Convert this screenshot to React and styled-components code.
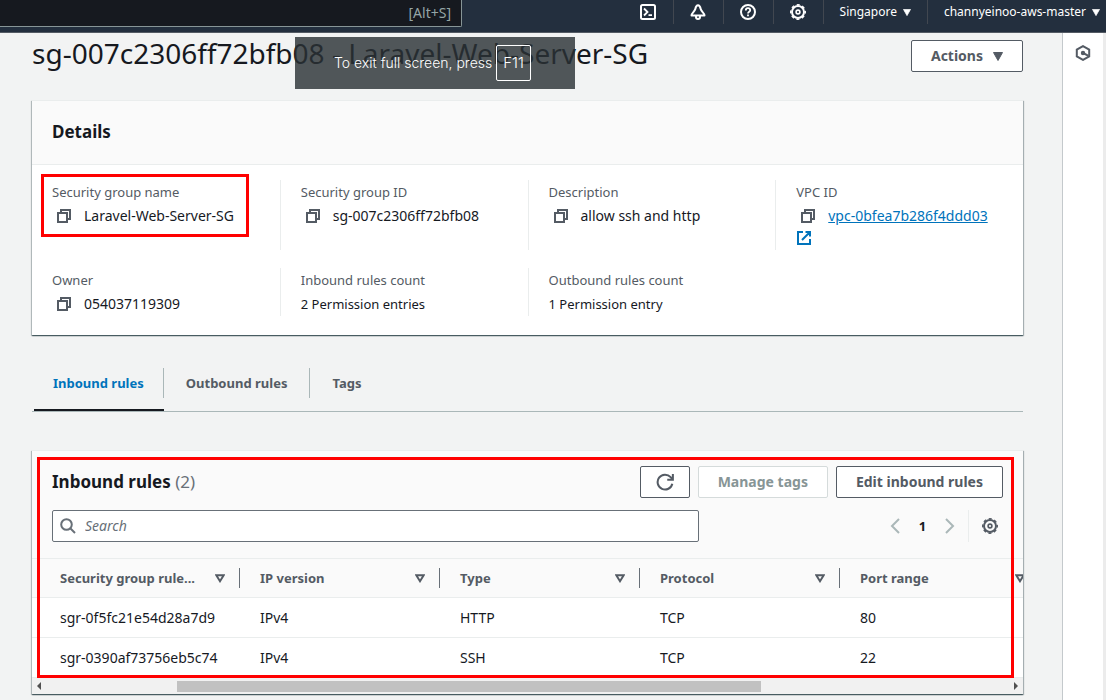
import React from "react";
import styled, { createGlobalStyle, css } from "styled-components";

const c = {
  text: "#16191f",
  label: "#545b64",
  link: "#0073bb",
  line: "#eaeded",
  disabled: "#879596",
  page: "#f2f3f3",
};

const GlobalStyle = createGlobalStyle`
  * { box-sizing: border-box; }
  body {
    margin: 0;
    background: ${c.page};
    color: ${c.text};
    font-family: "Noto Sans", "Open Sans", sans-serif;
    font-size: 13px;
    line-height: 22px;
    overflow: hidden;
  }
  button, input { font: inherit; color: inherit; margin: 0; }
  h1, h2, dl, dd, dt { margin: 0; font-weight: 400; }
  svg { display: block; flex: none; }
`;

const Page = styled.div`
  display: flex;
  flex-direction: column;
  height: 100vh;
`;

/* Top navigation */
const TopNav = styled.header`
  display: flex;
  flex: none;
  align-items: flex-start;
  justify-content: space-between;
  height: 33px;
  background: #232f3e;
  border-bottom: 1px solid #545b64;
  color: #fff;
`;
const GlobalSearch = styled.div`
  display: flex;
  justify-content: flex-end;
  width: 462px;
  height: 27px;
  padding: 2px 10px 0;
  background: #16191f;
  border: solid #879596;
  border-width: 0 1px 1px 0;
  border-radius: 0 0 2px 0;
  color: #95a5a6;
  font-size: 14px;
`;
const NavItems = styled.nav`
  display: flex;
  height: 24px;
`;
const NavButton = styled.button`
  display: flex;
  align-items: center;
  justify-content: center;
  gap: 6px;
  min-width: 50px;
  height: 24px;
  padding: ${(p) => (p.$wide ? "0 16px" : "0")};
  background: none;
  border: 0;
  border-left: ${(p) => (p.$first ? "0" : "1px solid #414750")};
  font-size: 12px;
  ${(p) => p.$last && css`padding-right: 6px;`}
`;

/* Page frame */
const Body = styled.div`
  display: flex;
  flex: 1;
  min-height: 0;
`;
const Main = styled.main`
  flex: 1;
  min-width: 0;
  padding: 5px 39px 0 32px;
  overflow: hidden;
`;
const ToolRail = styled.aside`
  display: flex;
  flex: none;
  justify-content: center;
  width: 44px;
  padding-top: 12px;
  background: #fff;
  border-left: 1px solid #c4c9cc;
  border-right: 3px solid #ececec;
`;
const IconButton = styled.button`
  display: flex;
  align-items: center;
  justify-content: center;
  width: 16px;
  height: 16px;
  padding: 0;
  background: none;
  border: 0;
  color: ${(p) => p.$color || c.label};
`;
const TitleRow = styled.div`
  display: flex;
  align-items: flex-end;
  justify-content: space-between;
  height: 34px;
`;
const Title = styled.h1`
  align-self: flex-start;
  font-size: 28px;
  line-height: 30px;
  white-space: nowrap;
`;
const Button = styled.button`
  display: flex;
  align-items: center;
  justify-content: center;
  gap: 10px;
  height: 32px;
  padding: 0 ${(p) => (p.$icon ? 15 : 19)}px;
  background: #fff;
  border: 1px solid ${c.label};
  border-radius: 2px;
  color: ${c.label};
  font-size: 14px;
  font-weight: 700;
  white-space: nowrap;
  &:disabled { border-color: #d5dbdb; color: ${c.disabled}; }
`;

/* Panels */
const Panel = styled.section`
  position: relative;
  background: #fff;
  border-top: 1px solid ${c.line};
  box-shadow: 0 1px 1px 0 rgba(0, 28, 36, 0.5), 1px 1px 1px 0 rgba(0, 28, 36, 0.25), -1px 1px 1px 0 rgba(0, 28, 36, 0.2);
`;
const DetailsPanel = styled(Panel)`
  margin-top: 28px;
`;
const PanelHeader = styled.div`
  padding: 19px 20px 20px;
  background: #fafafa;
  border-bottom: 1px solid ${c.line};
`;
const PanelTitle = styled.h2`
  font-size: 17px;
  font-weight: 700;
  line-height: 24px;
`;
const Count = styled.span`
  color: #687078;
  font-weight: 400;
`;
const Fields = styled.dl`
  display: grid;
  grid-template-columns: repeat(4, 1fr);
  row-gap: 18px;
  padding: 15px 0 19px;
`;
const Field = styled.div`
  position: relative;
  padding: 0 20px;
  border-left: ${(p) => (p.$first ? "0" : `1px solid ${c.line}`)};
`;
const Label = styled.dt`
  color: ${c.label};
  line-height: 24px;
`;
const Value = styled.dd`
  display: flex;
  flex-wrap: wrap;
  align-items: center;
  font-size: ${(p) => (p.$copy ? 14 : 13)}px;
  line-height: 24px;
`;
const CopyButton = styled(IconButton)`
  margin: 0 12px 0 4px;
`;
const Link = styled.a`
  color: ${c.link};
`;
const ExternalLink = styled.a`
  flex-basis: 100%;
  padding: 2px 0 4px;
  color: ${c.link};
`;
const FieldMarker = styled.span`
  position: absolute;
  inset: -6px 31px 13px 9px;
  border: 3px solid #f00;
  pointer-events: none;
`;
const PanelMarker = styled.span`
  position: absolute;
  inset: 6px 9px 16px 5px;
  border: 3px solid #f00;
  pointer-events: none;
`;

/* Tabs */
const Tabs = styled.div`
  display: flex;
  align-items: flex-end;
  height: 55px;
  margin-top: 22px;
  border-bottom: 1px solid #aab7b8;
`;
const Tab = styled.button`
  display: flex;
  align-items: flex-start;
  height: 43px;
  margin-left: ${(p) => (p.$active ? 2 : 0)}px;
  padding: 0;
  background: none;
  border: 0;
  border-bottom: 2px solid ${(p) => (p.$active ? c.text : "transparent")};
  color: ${(p) => (p.$active ? c.link : c.label)};
  font-weight: 700;
`;
const TabLabel = styled.span`
  padding: 4px ${(p) => (p.$active ? 19 : 22)}px;
  border-right: ${(p) => (p.$last ? "0" : "1px solid #aab7b8")};
`;

/* Rules table */
const RulesPanel = styled(Panel)`
  margin-top: 38px;
`;
const RulesHeader = styled.div`
  display: flex;
  flex-direction: column;
  gap: 12px;
  padding: 15px 20px 16px;
  background: #fafafa;
  border-bottom: 1px solid ${c.line};
`;
const Row = styled.div`
  display: flex;
  align-items: center;
  justify-content: space-between;
`;
const Actions = styled.div`
  display: flex;
  gap: 8px;
`;
const SearchBox = styled.label`
  display: flex;
  align-items: center;
  gap: 9px;
  width: 68%;
  height: 32px;
  padding: 0 7px;
  background: #fff;
  border: 1px solid #687078;
  border-radius: 2px;
  color: #687078;
`;
const SearchInput = styled.input`
  flex: 1;
  padding: 0;
  background: none;
  border: 0;
  outline: 0;
  font-size: 14px;
  &::placeholder { color: #687078; font-style: italic; opacity: 1; }
`;
const Pager = styled.div`
  display: flex;
  align-items: center;
`;
const PageNumber = styled.span`
  width: 39px;
  font-weight: 700;
  text-align: center;
`;
const Settings = styled.div`
  display: flex;
  align-items: center;
  height: 32px;
  margin-left: 10px;
  padding: 0 5px 0 13px;
  border-left: 1px solid ${c.line};
`;
const TableClip = styled.div`
  overflow: hidden;
`;
const Table = styled.table`
  width: 1208px;
  table-layout: fixed;
  border-collapse: separate;
  border-spacing: 0;
`;
const Th = styled.th`
  width: ${(p) => (p.$first ? 208 : 200)}px;
  height: 39px;
  padding: 0 0 0 ${(p) => (p.$first ? 28 : 20)}px;
  background: #fafafa;
  border-bottom: 1px solid ${c.line};
  color: ${c.label};
  font-weight: 700;
  text-align: left;
`;
const HeadCell = styled.div`
  display: flex;
  align-items: center;
  justify-content: space-between;
  height: 20px;
  padding-right: 14px;
  border-right: 1px solid #687078;
`;
const Td = styled.td`
  height: 40px;
  padding: 0 0 0 ${(p) => (p.$first ? 28 : 20)}px;
  border-bottom: 1px solid ${c.line};
  font-size: 14px;
`;
const ScrollTrack = styled.div`
  display: flex;
  align-items: center;
  justify-content: space-between;
  height: 16px;
  padding: 0 5px;
  background: #f1f1f1;
  color: #505050;
`;
const ScrollSpace = styled.div`
  display: flex;
  flex: 1;
  justify-content: center;
`;
const ScrollThumb = styled.div`
  width: 60%;
  height: 11px;
  margin-right: 12%;
  background: #c1c1c1;
`;

/* Full screen notice */
const Notice = styled.div`
  position: absolute;
  top: 37px;
  left: 295px;
  display: flex;
  align-items: center;
  gap: 4px;
  width: 280px;
  height: 52px;
  padding-left: 39px;
  background: rgba(42, 49, 53, 0.81);
  color: #fff;
  font-family: Inter, sans-serif;
  font-size: 14px;
  font-weight: 300;
  white-space: nowrap;
`;
const Key = styled.kbd`
  padding: 6px;
  border: 1px solid #fff;
  border-radius: 2px;
  font-family: inherit;
  font-size: 15px;
`;

const Svg = ({ size = 16, w = 2, children }) => (
  <svg width={size} height={size} viewBox="0 0 16 16" fill="none" stroke="currentColor" strokeWidth={w} aria-hidden="true">
    {children}
  </svg>
);
const CopyIcon = () => (
  <Svg>
    <path d="M2 5h9v9H2z" />
    <path d="M5 5V2h9v9h-3" />
  </Svg>
);
const ExternalIcon = () => (
  <Svg>
    <path d="M7 2H2v12h12V9M9.500 2H14v4.500M13.500 2.500L6 10" />
  </Svg>
);
const GearIcon = () => (
  <Svg>
    <circle cx="8" cy="8" r="6" />
    <circle cx="8" cy="8" r="7.300" strokeWidth="1.400" strokeDasharray="3.100 2.634" strokeDashoffset="1.550" />
    <circle cx="8" cy="8" r="1.900" strokeWidth="1.600" />
  </Svg>
);
const TerminalIcon = () => (
  <Svg>
    <rect x="1" y="1" width="14" height="14" rx="1.500" />
    <path d="M4 4.500L7.500 8 4 11.500M8.500 11.200H12" strokeWidth="1.800" />
  </Svg>
);
const BellIcon = () => (
  <Svg>
    <path d="M8 1.200C6.200 1.200 5.700 3 5.300 5 4.800 7.500 1.500 9 1.500 11.500h13C14.500 9 11.200 7.500 10.700 5 10.300 3 9.800 1.200 8 1.200z" strokeLinejoin="round" />
    <path d="M6 11.500v1.500a2 2 0 0 0 4 0v-1.500" />
  </Svg>
);
const HelpIcon = () => (
  <Svg>
    <circle cx="8" cy="8" r="7" />
    <path d="M5.800 6.500C5.800 5 6.700 4.200 8 4.200s2.200.8 2.200 2C10.200 7.700 8 7.700 8 9.500M8 10.500v1.800" strokeWidth="1.800" />
  </Svg>
);
const RefreshIcon = () => (
  <Svg size={18} w={1.8}>
    <path d="M14.500 9.500A6.600 6.600 0 1 1 13 3.700L14.500 5.500" />
    <path d="M15 .8V6h-5" />
  </Svg>
);
const SearchIcon = () => (
  <Svg>
    <circle cx="6.500" cy="6.500" r="5.300" />
    <path d="M10.500 10.500l4.500 4.500" />
  </Svg>
);
const HexIcon = () => (
  <Svg>
    <path d="M8 1.100l6.200 3.500v6.800L8 14.900l-6.200-3.500V4.600z" />
    <path d="M8 8l5.500 2.800" />
    <circle cx="8" cy="8" r="1.200" fill="currentColor" />
  </Svg>
);
const CaretDown = ({ size = 10 }) => (
  <svg width={size} height={size - 1} viewBox="0 0 10 9" aria-hidden="true">
    <path d="M.5.5h9L5 8.500z" fill="currentColor" stroke="currentColor" strokeLinejoin="round" />
  </svg>
);
const SortIcon = () => (
  <svg width="10" height="9" viewBox="0 0 10 9" aria-hidden="true">
    <path d="M1.300 1.300h7.400L5 7.200z" fill="none" stroke="currentColor" strokeWidth="2" />
  </svg>
);
const Chevron = ({ d }) => (
  <svg width="10" height="16" viewBox="0 0 10 16" fill="none" stroke="currentColor" strokeWidth="2" aria-hidden="true">
    <path d={d} />
  </svg>
);
const Arrow = ({ d }) => (
  <svg width="4" height="8" viewBox="0 0 4 8" aria-hidden="true">
    <path d={d} fill="currentColor" />
  </svg>
);

const fields = [
  { label: "Security group name", value: "Laravel-Web-Server-SG", copy: true, marked: true },
  { label: "Security group ID", value: "sg-007c2306ff72bfb08", copy: true },
  { label: "Description", value: "allow ssh and http", copy: true },
  { label: "VPC ID", value: "vpc-0bfea7b286f4ddd03", copy: true, link: true },
  { label: "Owner", value: "054037119309", copy: true },
  { label: "Inbound rules count", value: "2 Permission entries" },
  { label: "Outbound rules count", value: "1 Permission entry" },
];
const columns = ["Security group rule...", "IP version", "Type", "Protocol", "Port range", ""];
const rules = [
  ["sgr-0f5fc21e54d28a7d9", "IPv4", "HTTP", "TCP", "80", ""],
  ["sgr-0390af73756eb5c74", "IPv4", "SSH", "TCP", "22", ""],
];

export default function App() {
  return (
    <Page>
      <GlobalStyle />
      <TopNav>
        <GlobalSearch>[Alt+S]</GlobalSearch>
        <NavItems>
          <NavButton $first aria-label="CloudShell"><TerminalIcon /></NavButton>
          <NavButton aria-label="Notifications"><BellIcon /></NavButton>
          <NavButton aria-label="Help"><HelpIcon /></NavButton>
          <NavButton aria-label="Settings"><GearIcon /></NavButton>
          <NavButton $wide>Singapore <CaretDown size={8} /></NavButton>
          <NavButton $wide $last>channyeinoo-aws-master <CaretDown size={8} /></NavButton>
        </NavItems>
      </TopNav>
      <Body>
        <Main>
          <TitleRow>
            <Title>sg-007c2306ff72bfb08 - Laravel-Web-Server-SG</Title>
            <Button>Actions <CaretDown /></Button>
          </TitleRow>

          <DetailsPanel>
            <PanelHeader><PanelTitle>Details</PanelTitle></PanelHeader>
            <Fields>
              {fields.map((f, i) => (
                <Field key={f.label} $first={i % 4 === 0}>
                  <Label>{f.label}</Label>
                  <Value $copy={f.copy}>
                    {f.copy && <CopyButton aria-label={`Copy ${f.label}`}><CopyIcon /></CopyButton>}
                    {f.link ? <Link href="#vpc">{f.value}</Link> : f.value}
                    {f.link && <ExternalLink href="#vpc" aria-label="Open VPC in a new tab"><ExternalIcon /></ExternalLink>}
                  </Value>
                  {f.marked && <FieldMarker />}
                </Field>
              ))}
            </Fields>
          </DetailsPanel>

          <Tabs role="tablist">
            <Tab role="tab" aria-selected="true" $active><TabLabel $active>Inbound rules</TabLabel></Tab>
            <Tab role="tab"><TabLabel>Outbound rules</TabLabel></Tab>
            <Tab role="tab"><TabLabel $last>Tags</TabLabel></Tab>
          </Tabs>

          <RulesPanel>
            <RulesHeader>
              <Row>
                <PanelTitle>Inbound rules <Count>(2)</Count></PanelTitle>
                <Actions>
                  <Button $icon aria-label="Refresh"><RefreshIcon /></Button>
                  <Button disabled>Manage tags</Button>
                  <Button>Edit inbound rules</Button>
                </Actions>
              </Row>
              <Row>
                <SearchBox>
                  <SearchIcon />
                  <SearchInput type="text" placeholder="Search" aria-label="Search rules" />
                </SearchBox>
                <Pager>
                  <IconButton $color="#aab7b8" aria-label="Previous page"><Chevron d="M9 1L2 8l7 7" /></IconButton>
                  <PageNumber>1</PageNumber>
                  <IconButton $color="#aab7b8" aria-label="Next page"><Chevron d="M1 1l7 7-7 7" /></IconButton>
                  <Settings><IconButton aria-label="Preferences"><GearIcon /></IconButton></Settings>
                </Pager>
              </Row>
            </RulesHeader>
            <TableClip>
              <Table>
                <thead>
                  <tr>
                    {columns.map((name, i) => (
                      <Th key={i} $first={i === 0}><HeadCell>{name}<SortIcon /></HeadCell></Th>
                    ))}
                  </tr>
                </thead>
                <tbody>
                  {rules.map((r) => (
                    <tr key={r[0]}>
                      {r.map((v, i) => <Td key={i} $first={i === 0}>{v}</Td>)}
                    </tr>
                  ))}
                </tbody>
              </Table>
            </TableClip>
            <ScrollTrack>
              <Arrow d="M4 0v8L0 4z" />
              <ScrollSpace><ScrollThumb /></ScrollSpace>
              <Arrow d="M0 0v8l4-4z" />
            </ScrollTrack>
            <PanelMarker />
          </RulesPanel>
        </Main>
        <ToolRail>
          <IconButton aria-label="Tools"><HexIcon /></IconButton>
        </ToolRail>
      </Body>
      <Notice>To exit full screen, press <Key>F11</Key></Notice>
    </Page>
  );
}
